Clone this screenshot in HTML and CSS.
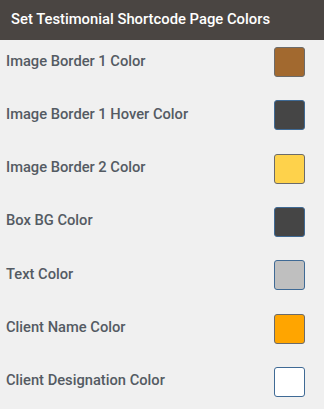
FILE: index.html
```html
<!DOCTYPE html>
<html lang="en">
<head>
  <meta charset="UTF-8" />
  <title>Testimonial Shortcode Page Colors</title>
  <link rel="stylesheet" href="styles.css">
</head>
<body>
  <div class="panel">
    <div class="panel-head">Set Testimonial Shortcode Page Colors</div>
    <ul class="color-list">
      <li class="color-row"><span>Image Border 1 Color</span><span class="swatch" style="background:#a2692f"></span></li>
      <li class="color-row"><span>Image Border 1 Hover Color</span><span class="swatch swatch-active" style="background:#454545"></span></li>
      <li class="color-row"><span>Image Border 2 Color</span><span class="swatch" style="background:#fed24b"></span></li>
      <li class="color-row"><span>Box BG Color</span><span class="swatch swatch-active" style="background:#454545"></span></li>
      <li class="color-row"><span>Text Color</span><span class="swatch swatch-active" style="background:#bfbfbf"></span></li>
      <li class="color-row"><span>Client Name Color</span><span class="swatch" style="background:#ffa500"></span></li>
      <li class="color-row"><span>Client Designation Color</span><span class="swatch swatch-active" style="background:#ffffff"></span></li>
    </ul>
  </div>
</body>
</html>
```

FILE: styles.css
```css
*, *::before, *::after {
  box-sizing: border-box;
}

body {
  margin: 0;
  font-family: Roboto, 'Liberation Sans', sans-serif;
  background-color: #f0f0f0;
  -webkit-font-smoothing: antialiased;
}

.panel-head {
  height: 40px;
  padding: 0 11px 2px;
  display: flex;
  align-items: center;
  background: #4a4542;
  color: #ffffff;
  font-size: 14.8px;
  font-weight: 500;
}

.color-list {
  list-style: none;
  margin: 0;
  padding: 7px 19px 0 6px;
}

.color-row {
  height: 30px;
  margin-bottom: 23.33px;
  display: flex;
  align-items: center;
  justify-content: space-between;
  color: #545b63;
  font-size: 14.7px;
  font-weight: 500;
}

.color-row > span:first-child {
  margin-top: -3px;
}

.swatch {
  width: 31px;
  height: 30px;
  border: 1px solid #6b6b6b;
  border-radius: 3px;
}

.swatch-active {
  border-color: #3f6a95;
}
```
